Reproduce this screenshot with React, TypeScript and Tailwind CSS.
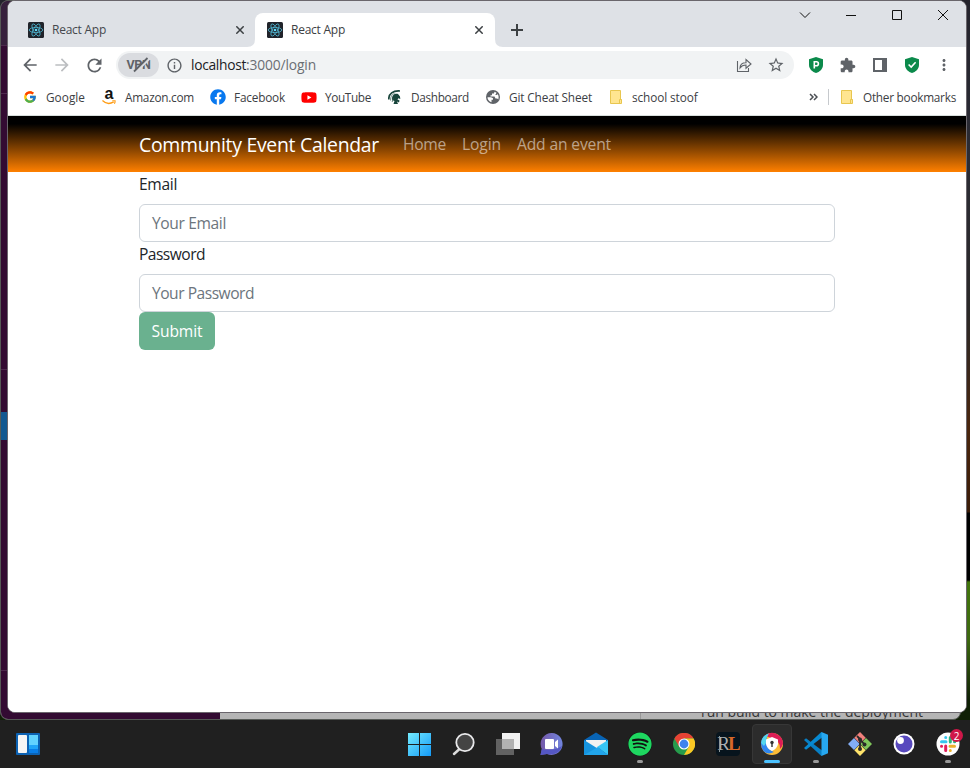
import { useLayoutEffect, useRef, useState, type ReactNode } from "react";
import { FcGoogle } from "react-icons/fc";
import { FaFacebook, FaSpotify, FaYoutube } from "react-icons/fa";
import {
  MdArrowBack,
  MdArrowForward,
  MdMoreVert,
  MdInfoOutline,
  MdRefresh,
  MdStarBorder,
} from "react-icons/md";

/** Single line of text whose tracking is adjusted to fill the given width. */
function Label({ text, width, className = "" }: { text: string; width: number; className?: string }) {
  const ref = useRef<HTMLSpanElement>(null);
  const [spacing, setSpacing] = useState(0);
  useLayoutEffect(() => {
    if (!ref.current) return;
    const natural = ref.current.getBoundingClientRect().width - spacing * text.length;
    setSpacing((width - natural) / text.length);
  }, [text, width]);
  return (
    <span ref={ref} className={"inline-block shrink-0 whitespace-nowrap " + className} style={{ letterSpacing: spacing }}>
      {text}
    </span>
  );
}

function ReactIcon() {
  return (
    <svg width="16" height="16" viewBox="0 0 16 16" className="shrink-0">
      <rect width="16" height="16" rx="1.5" fill="#20232a" />
      <g fill="none" stroke="#4fb6d1" strokeWidth="0.8">
        <ellipse cx="8" cy="8" rx="6.8" ry="2.6" />
        <ellipse cx="8" cy="8" rx="6.8" ry="2.6" transform="rotate(60 8 8)" />
        <ellipse cx="8" cy="8" rx="6.8" ry="2.6" transform="rotate(120 8 8)" />
      </g>
      <circle cx="8" cy="8" r="1.3" fill="#61dafb" />
    </svg>
  );
}

function CloseX() {
  return (
    <svg width="8" height="8" viewBox="0 0 8 8" className="shrink-0" stroke="#3c4043" strokeWidth="1.5">
      <path d="M0.3 0.3 7.7 7.7M7.7 0.3 0.3 7.7" />
    </svg>
  );
}

function TabStrip() {
  return (
    <div className="flex h-[46px] shrink-0 items-end bg-[#dee1e6]">
      <div className="flex h-[34px] w-[239px] items-center pr-[3px] pl-5">
        <ReactIcon />
        <Label text="React App" width={54} className="ml-2 text-[12px] text-[#45484d]" />
        <span className="ml-auto"><CloseX /></span>
      </div>
      <svg width="8" height="8" viewBox="0 0 8 8" className="shrink-0"><path d="M8 0Q8 8 0 8H8Z" fill="#fff" /></svg>
      <div className="flex h-[34px] w-[240px] items-center rounded-t-lg bg-white px-3">
        <ReactIcon />
        <Label text="React App" width={54} className="ml-2 text-[12px] text-[#3c4043]" />
        <span className="ml-auto"><CloseX /></span>
      </div>
      <svg width="8" height="8" viewBox="0 0 8 8" className="shrink-0"><path d="M0 0Q0 8 8 8H0Z" fill="#fff" /></svg>
      <svg width="12" height="12" viewBox="0 0 12 12" className="mb-[11px] ml-2 shrink-0" stroke="#3c4043" strokeWidth="2">
        <path d="M6 0V12M0 6H12" />
      </svg>
      <svg width="150" height="12" viewBox="0 0 150 12" className="mr-[17px] mb-[26px] ml-auto shrink-0" fill="none" stroke="#111">
        <path d="M1 3.5 6 8.5 11 3.5" />
        <path d="M47 6.5H57" />
        <path d="M93.500 1.500H102.500V10.500H93.500Z" />
        <path d="M139 1 149 11M149 1 139 11" />
      </svg>
    </div>
  );
}

function ShieldP() {
  return (
    <svg width="14" height="16" viewBox="0 0 14 16" className="shrink-0">
      <path d="M7 0 14 2.300V8C14 12 10.500 15 7 16C3.500 15 0 12 0 8V2.300Z" fill="#0b8a4b" />
      <path d="M5.300 11.500V4.700H7.400A1.900 1.900 0 0 1 7.400 8.700H5.500" fill="none" stroke="#fff" strokeWidth="1.600" />
    </svg>
  );
}

function ShieldCheck() {
  return (
    <svg width="14" height="16" viewBox="0 0 14 16" className="shrink-0">
      <path d="M7 0 14 2.300V8C14 12 10.500 15 7 16C3.500 15 0 12 0 8V2.300Z" fill="#0b8a4b" />
      <path d="M3.600 7.500 6.200 10 10.600 5.300" fill="none" stroke="#fff" strokeWidth="1.600" />
    </svg>
  );
}

function Puzzle() {
  return (
    <svg width="16" height="16" viewBox="1 0 23 23" className="ml-[17px] shrink-0" fill="#5f6368">
      <path d="M20.5 11H19V7c0-1.1-.9-2-2-2h-4V3.500C13 2.120 11.880 1 10.500 1S8 2.120 8 3.500V5H4c-1.100 0-2 .9-2 2v3.800h1.500c1.490 0 2.700 1.210 2.700 2.700s-1.210 2.700-2.700 2.700H2V20c0 1.100.9 2 2 2h3.800v-1.500c0-1.490 1.210-2.700 2.700-2.700s2.700 1.210 2.700 2.700V22H17c1.100 0 2-.9 2-2v-4h1.500c1.380 0 2.500-1.120 2.500-2.500S21.880 11 20.500 11Z" />
    </svg>
  );
}

function Toolbar() {
  return (
    <div className="flex h-9 shrink-0 items-center bg-white text-[#5f6368]">
      <MdArrowBack size={20} className="ml-3" />
      <MdArrowForward size={20} className="ml-3 text-[#bcbec1]" />
      <MdRefresh size={21} className="ml-3" />
      <div className="ml-[11px] flex h-7 w-[678px] items-center rounded-full bg-[#f1f3f4]">
        <span className="ml-0.5 flex h-6 w-[41px] shrink-0 items-center justify-center rounded-full bg-[#dadce0]">
          <span className="relative flex h-4 w-6 items-center justify-center">
            <Label text="VPN" width={24} className="font-[Roboto,sans-serif] text-[12.5px] leading-4 font-bold text-[#5f6368]" />
            <svg width="24" height="16" viewBox="0 0 24 16" className="absolute top-0 left-0">
              <path d="M9 15 22 2" stroke="#dadce0" strokeWidth="2.400" />
              <path d="M7 14.500 20.500 1" stroke="#5f6368" strokeWidth="1.800" />
            </svg>
          </span>
        </span>
        <MdInfoOutline size={17} className="ml-[7px] shrink-0" />
        <span className="ml-2 flex text-[13.8px]">
          <Label text="localhost" width={55} className="text-[#202124]" />
          <Label text=":3000/login" width={70} className="text-[#6a6e73]" />
        </span>
        <svg width="16" height="16" viewBox="0 0 16 16" className="ml-auto shrink-0" fill="none" stroke="#5f6368" strokeWidth="1.100">
          <path d="M1.500 4V14.500H12.500V11" />
          <path d="M4 11Q4 5.800 10 5.800V2.500L15 7 10 11.200V8Q6 8 4 11Z" />
        </svg>
        <MdStarBorder size={18} className="mr-[9px] ml-[15px] shrink-0" />
      </div>
      <span className="ml-[15px]"><ShieldP /></span>
      <Puzzle />
      <svg width="14" height="14" viewBox="0 0 14 14" className="ml-[17px]" fill="#5f6368">
        <path fillRule="evenodd" d="M0 0H14V14H0ZM2 2V12H9V2Z" />
      </svg>
      <span className="ml-[18px]"><ShieldCheck /></span>
      <MdMoreVert size={18} className="ml-4" />
    </div>
  );
}

function Folder() {
  return (
    <svg width="12" height="14" viewBox="0 0 12 14">
      <path d="M.5.500H10.500V9.500H11.500V13.500H.5Z" fill="#ffe590" stroke="#e8c64f" />
      <path d="M9.500 13V9.500H11.500" fill="none" stroke="#e8c64f" />
    </svg>
  );
}

function Spartan() {
  return (
    <svg width="14" height="14" viewBox="0 0 14 14">
      <path d="M.8 9.500C.5 3.500 5 .5 12 1" fill="none" stroke="#18453b" strokeWidth="1.700" />
      <path d="M4 10C3.500 5 7 3.200 10 4L12 6.500 12.300 9 10.300 8.300 9.500 9.500 11.500 10.500 11 12.500 9 11.500 10 14H5.500L6.500 11Z" fill="#18453b" />
      <path d="M2.500 10.500Q2.500 4.500 6.500 3.500M4.200 12 5 8.500" fill="none" stroke="#4b7067" strokeWidth=".8" />
    </svg>
  );
}

function Globe() {
  return (
    <svg width="14" height="14" viewBox="0 0 14 14">
      <circle cx="7" cy="7" r="7" fill="#5f6368" />
      <path d="M1.500 7.200H5L7 8.300V9.700H5.500V12.300C3 11.500 1.500 9.500 1.500 7.200ZM8.500 1.700 8 3.500H6V5.200H4.500V6.500H8.500L9.500 8.500H11.200L12.300 9.500C13 7 12.500 5.500 11.800 4.300L10.500 5H9.300L10.500 2.800Z" fill="#fff" />
    </svg>
  );
}

function Bookmark({ icon, text, width }: { icon: ReactNode; text: string; width: number }) {
  return (
    <div className="flex items-center gap-2">
      <span className="flex size-4 shrink-0 items-center justify-center">{icon}</span>
      <Label text={text} width={width} />
    </div>
  );
}

function AmazonIcon() {
  return (
    <span className="relative flex size-4 items-start justify-center">
      <span className="-mt-[3px] font-['Liberation_Sans',sans-serif] text-[16px] leading-4 font-bold text-[#111]">a</span>
      <svg width="14" height="5" viewBox="0 0 14 5" className="absolute top-[11px] left-px" fill="none" stroke="#ff9d16" strokeWidth="1.400">
        <path d="M.4.500Q5.500 5.600 11.700 1.900" /><path d="M10.300.700H13.100Q13.300 2.200 12.400 3.700" strokeWidth="1.100" />
      </svg>
    </span>
  );
}

function BookmarksBar() {
  return (
    <div className="flex h-[33px] shrink-0 items-start border-b border-[#d8dfdc] bg-white pt-1.5 text-[11.8px] text-[#3c4043]">
      <div className="ml-3.5 flex gap-4 leading-4">
        <Bookmark icon={<FcGoogle size={14} />} text="Google" width={39} />
        <Bookmark icon={<AmazonIcon />} text="Amazon.com" width={69} />
        <Bookmark icon={<FaFacebook size={16} color="#0878ef" />} text="Facebook" width={51} />
        <Bookmark icon={<FaYoutube size={17} color="#f00" />} text="YouTube" width={46} />
        <Bookmark icon={<Spartan />} text="Dashboard" width={58} />
        <Bookmark icon={<Globe />} text="Git Cheat Sheet" width={83} />
        <Bookmark icon={<Folder />} text="school stoof" width={65.500} />
      </div>
      <svg width="9" height="8" viewBox="0 0 9 8" className="mt-1 ml-auto" fill="none" stroke="#4b4f54" strokeWidth="1.500">
        <path d="M1 1 4 4 1 7M5 1 8 4 5 7" />
      </svg>
      <div className="ml-2.5 h-4 w-px bg-[#c6c9cd]" />
      <div className="mr-2.5 ml-2.5 flex leading-4">
        <Bookmark icon={<Folder />} text="Other bookmarks" width={93} />
      </div>
    </div>
  );
}

function Field({ label, labelWidth, placeholder, placeholderWidth }: { label: string; labelWidth: number; placeholder: string; placeholderWidth: number }) {
  return (
    <div>
      <div className="mb-2 flex h-6 items-center leading-6"><Label text={label} width={labelWidth} className="text-[#212529]" /></div>
      <div className="flex h-[38px] items-center rounded-md border border-[#ced4da] bg-white px-3 leading-6">
        <Label text={placeholder} width={placeholderWidth} className="text-[#6c757d]" />
      </div>
    </div>
  );
}

function Page() {
  return (
    <div className="flex-1 bg-white text-[15.6px]">
      <nav className="flex h-14 items-center bg-[linear-gradient(#000_14%,#ff8000)] pl-[131px] text-[#ffffff8c]">
        <Label text="Community Event Calendar" width={240} className="mt-0.5 text-[19.4px] text-white" />
        <div className="mt-0.5 ml-6 flex gap-4">
          <Label text="Home" width={43} />
          <Label text="Login" width={39} />
          <Label text="Add an event" width={94} />
        </div>
      </nav>
      <main className="ml-[131px] flex w-[696px] flex-col">
        <Field label="Email" labelWidth={38} placeholder="Your Email" placeholderWidth={74} />
        <Field label="Password" labelWidth={66} placeholder="Your Password" placeholderWidth={102} />
        <button className="flex h-[38px] w-[76px] items-center justify-center rounded-md bg-[#6ab18f] pt-0.5 text-white">
          <Label text="Submit" width={51} className="font-medium" />
        </button>
      </main>
    </div>
  );
}

function VsCode() {
  return (
    <svg width="24" height="24" viewBox="0 0 24 24">
      <path d="M0 8 2 6.300 18 18.500V24L16.500 23.300Z" fill="#087fc4" />
      <path d="M0 16 2 17.700 18 5.500V0L16.500.700Z" fill="#0789d1" />
      <path d="M17.500 0 24 2.800V21.200L17.500 24Z" fill="#27a7ef" />
    </svg>
  );
}

function Slack() {
  return (
    <span className="relative">
      <svg width="24" height="24" viewBox="0 0 24 24">
        <circle cx="12" cy="12" r="11.500" fill="#fff" />
        <g strokeWidth="3" strokeLinecap="round">
          <path d="M5.500 9.700H10M9.700 5.500V5.600" stroke="#36c5f0" />
          <path d="M14.300 5.500V10M18.500 9.700H18.600" stroke="#2eb67d" />
          <path d="M14 14.300H18.500M14.300 18.500V18.600" stroke="#ecb22e" />
          <path d="M9.700 14V18.500M5.500 14.300H5.600" stroke="#e01e5a" />
        </g>
      </svg>
      <span className="absolute -top-[3px] left-[14px] flex size-[13px] items-center justify-center rounded-full bg-[#cf1749] text-[10px] leading-3 text-white">2</span>
    </span>
  );
}

function TaskItem({ children, running = false, active = false }: { children: ReactNode; running?: boolean; active?: boolean }) {
  return (
    <div className={"relative flex h-10 w-10 shrink-0 items-center justify-center rounded " + (active ? "border border-[#373737] bg-[#2c2c2c]" : "")}>
      {children}
      {running && <span className="absolute bottom-px h-[3px] w-1.5 rounded-full bg-[#999]" />}
      {active && <span className="absolute bottom-0 h-[3px] w-4 rounded-full bg-[#4cc2ff]" />}
    </div>
  );
}

function Taskbar() {
  return (
    <div className="flex h-12 items-center bg-[#202020]">
      <svg width="24" height="22" viewBox="0 0 24 22" className="ml-4">
        <rect width="24" height="22" rx="1" fill="#0c62b3" />
        <rect x="2" y="2" width="9" height="18" rx="1" fill="#f5f5f5" />
        <path d="M13 2H22V12H13Z" fill="#62d3ff" /><path d="M13 12H22V16H13Z" fill="#20a5f8" /><path d="M13 16H22V20H13Z" fill="#087ee8" />
      </svg>
      <div className="mr-[2px] ml-auto flex gap-1">
        <TaskItem>
          <svg width="24" height="24" viewBox="0 0 24 24">
            <defs><linearGradient id="win" x2="1" y2="1" gradientUnits="objectBoundingBox"><stop stopColor="#74ecff" /><stop offset="1" stopColor="#149af7" /></linearGradient></defs>
            <path d="M0 1H11V12H0ZM12 1H23V12H12ZM0 13H11V24H0ZM12 13H23V24H12Z" fill="url(#win)" />
          </svg>
        </TaskItem>
        <TaskItem>
          <svg width="24" height="24" viewBox="0 0 24 24">
            <path d="M7.500 17 2 22" stroke="#ddd" strokeWidth="2.500" strokeLinecap="round" />
            <circle cx="13" cy="10.500" r="8.700" fill="#444" stroke="#e8e8ea" strokeWidth="1.800" />
          </svg>
        </TaskItem>
        <TaskItem>
          <svg width="24" height="24" viewBox="0 0 24 24">
            <path d="M6 1H24V17H6Z" fill="#f1f1f1" /><path d="M0 7H18V23H0Z" fill="#626262" /><path d="M6 7H18V17H6Z" fill="#b2b2b2" />
          </svg>
        </TaskItem>
        <TaskItem>
          <svg width="24" height="24" viewBox="0 0 24 24">
            <defs><linearGradient id="chat" x2="1" y2="0"><stop stopColor="#7558a8" /><stop offset="1" stopColor="#7185df" /></linearGradient></defs>
            <path d="M12 1A11 11 0 1 1 7 22L.5 23 1.800 17A11 11 0 0 1 12 1Z" fill="url(#chat)" />
            <path d="M.5 23 1.800 17Q12 20 22 14 19 24 7 22Z" fill="#5557c4" />
            <rect x="5" y="7" width="9" height="10" rx="1" fill="#fff" /><path d="M15 10 18 7.500V16.500L15 14Z" fill="#fff" />
          </svg>
        </TaskItem>
        <TaskItem>
          <svg width="24" height="24" viewBox="0 0 24 24">
            <path d="M0 8 12 .5 24 8V12H0Z" fill="#0864b5" /><path d="M2 8H22V16H2Z" fill="#f1f1f1" />
            <path d="M0 8 24 23H0Z" fill="#1694df" /><path d="M24 8V23L13 15Z" fill="#38c6f5" /><path d="M0 23 14 15 24 23Z" fill="#21a5eb" />
          </svg>
        </TaskItem>
        <TaskItem running>
          <span className="flex size-6 items-center justify-center rounded-full bg-[#111]"><FaSpotify size={24} color="#1ed760" /></span>
        </TaskItem>
        <TaskItem>
          <svg width="22" height="22" viewBox="0 0 22 22">
            <circle cx="11" cy="11" r="11" fill="#269c4c" />
            <path d="M1.400 5.500A11 11 0 0 1 20.600 5.500H11L6.200 13.800Z" fill="#e84234" />
            <path d="M11 5.500H20.600A11 11 0 0 1 11 22L15.800 13.800Z" fill="#fbc824" />
            <circle cx="11" cy="11" r="5.500" fill="#fff" /><circle cx="11" cy="11" r="4.400" fill="#3f82ee" />
          </svg>
        </TaskItem>
        <TaskItem>
          <span className="relative flex size-6 items-center justify-center overflow-hidden rounded-sm bg-[#07141d] font-['Liberation_Serif',serif] text-[19px] leading-6 tracking-[-2px]">
            <span className="text-[#a9b0b2]">R</span><span className="font-bold text-[#d66829]">L</span>
            <span className="absolute top-[4px] left-[3px] h-4 w-px bg-[#8d9698]" />
          </span>
        </TaskItem>
        <TaskItem active>
          <svg width="24" height="24" viewBox="0 0 24 24">
            <circle cx="12" cy="12" r="11" fill="#fdbd37" />
            <path d="M5 3.500A11 11 0 0 1 23 12Q22 15 20 17 20 7 11 6Z" fill="#de1d56" />
            <path d="M1 12A11 11 0 0 1 8 1.800Q5 8 7 14 9 18 14 20 8 23 4 19.500Q1 16 1 12Z" fill="#2f86f0" />
            <path d="M1.100 11A11 11 0 0 1 9 1.500Q5.500 6 6 11L4 14Z" fill="#53d6ed" />
            <path d="M12 5 18 7.500V12Q17 17 12 19 7 17 6 12V7.500Z" fill="#fff" />
            <circle cx="12" cy="10.500" r="1.700" fill="#333" /><path d="M11.300 11H12.700V15H11.300Z" fill="#333" />
          </svg>
        </TaskItem>
        <TaskItem running><VsCode /></TaskItem>
        <TaskItem>
          <svg width="24" height="24" viewBox="0 0 24 24">
            <path d="M12 0 17.700 5.700 12 11.500 6.300 5.700Z" fill="#f1807b" /><path d="M6 6 11.800 12 6 18 0 12Z" fill="#82adf5" />
            <path d="M18 6 24 12 18 18 12.200 12Z" fill="#80c65b" /><path d="M12 12.500 17.700 18.200 12 24 6.300 18.200Z" fill="#ffe36b" />
            <path d="M9 4 12 7V18M12 7 16 12" fill="none" stroke="#292929" strokeWidth="1.800" />
            <circle cx="12" cy="7.500" r="2" fill="#292929" /><circle cx="12" cy="17" r="2" fill="#292929" /><circle cx="16.500" cy="12.500" r="2" fill="#292929" />
          </svg>
        </TaskItem>
        <TaskItem>
          <svg width="24" height="24" viewBox="0 0 24 24">
            <circle cx="12" cy="12" r="10.500" fill="#fff" /><circle cx="12" cy="12" r="8.500" fill="#5849be" /><circle cx="8.500" cy="8.500" r="3.400" fill="#fff" />
          </svg>
        </TaskItem>
        <TaskItem running><Slack /></TaskItem>
      </div>
    </div>
  );
}

export default function App() {
  return (
    <div className="h-[768px] w-[970px] overflow-hidden bg-[#202020] font-['Open_Sans','Noto_Sans',sans-serif]">
      <div className="relative h-[720px] overflow-hidden bg-[linear-gradient(#24232c_0px,#2b2c35_160px,#2a2828_310px,#4a260d_430px,#3a1c08_512px,#000_513px,#000_580px,#42760c_582px,#3d6810_640px,#102006_700px)]">
        <div className="absolute top-0 left-0 flex h-[720px] w-[961px] overflow-hidden rounded-lg border border-[#555955] bg-[#b5b5b5]">
          <div className="flex h-full w-[219px] flex-col bg-[#330b32]">
            <div className="h-[44px] bg-[#36203c]" />
            <div className="h-[49px] border-y border-[#4d294d]" />
            <div className="h-[276px] border-b border-[#4d294d]" />
            <div className="mt-[42px] h-7 bg-[#125890]" />
            <div className="mt-[230px] h-px bg-[#4d294d]" />
          </div>
          <div className="flex flex-1 items-end">
            <div className="h-full w-[421px] border-r border-[#999]" />
            <div className="ml-[60px] text-[14px] leading-5 text-[#363636]">
              <Label text="run build to make the deployment" width={222} className="relative top-[3px]" />
            </div>
          </div>
        </div>
        <div className="absolute top-0 left-[7px] flex h-[713px] w-[960px] flex-col overflow-hidden rounded-lg border border-[#6a666c] bg-white">
          <TabStrip />
          <Toolbar />
          <BookmarksBar />
          <Page />
        </div>
      </div>
      <Taskbar />
    </div>
  );
}
